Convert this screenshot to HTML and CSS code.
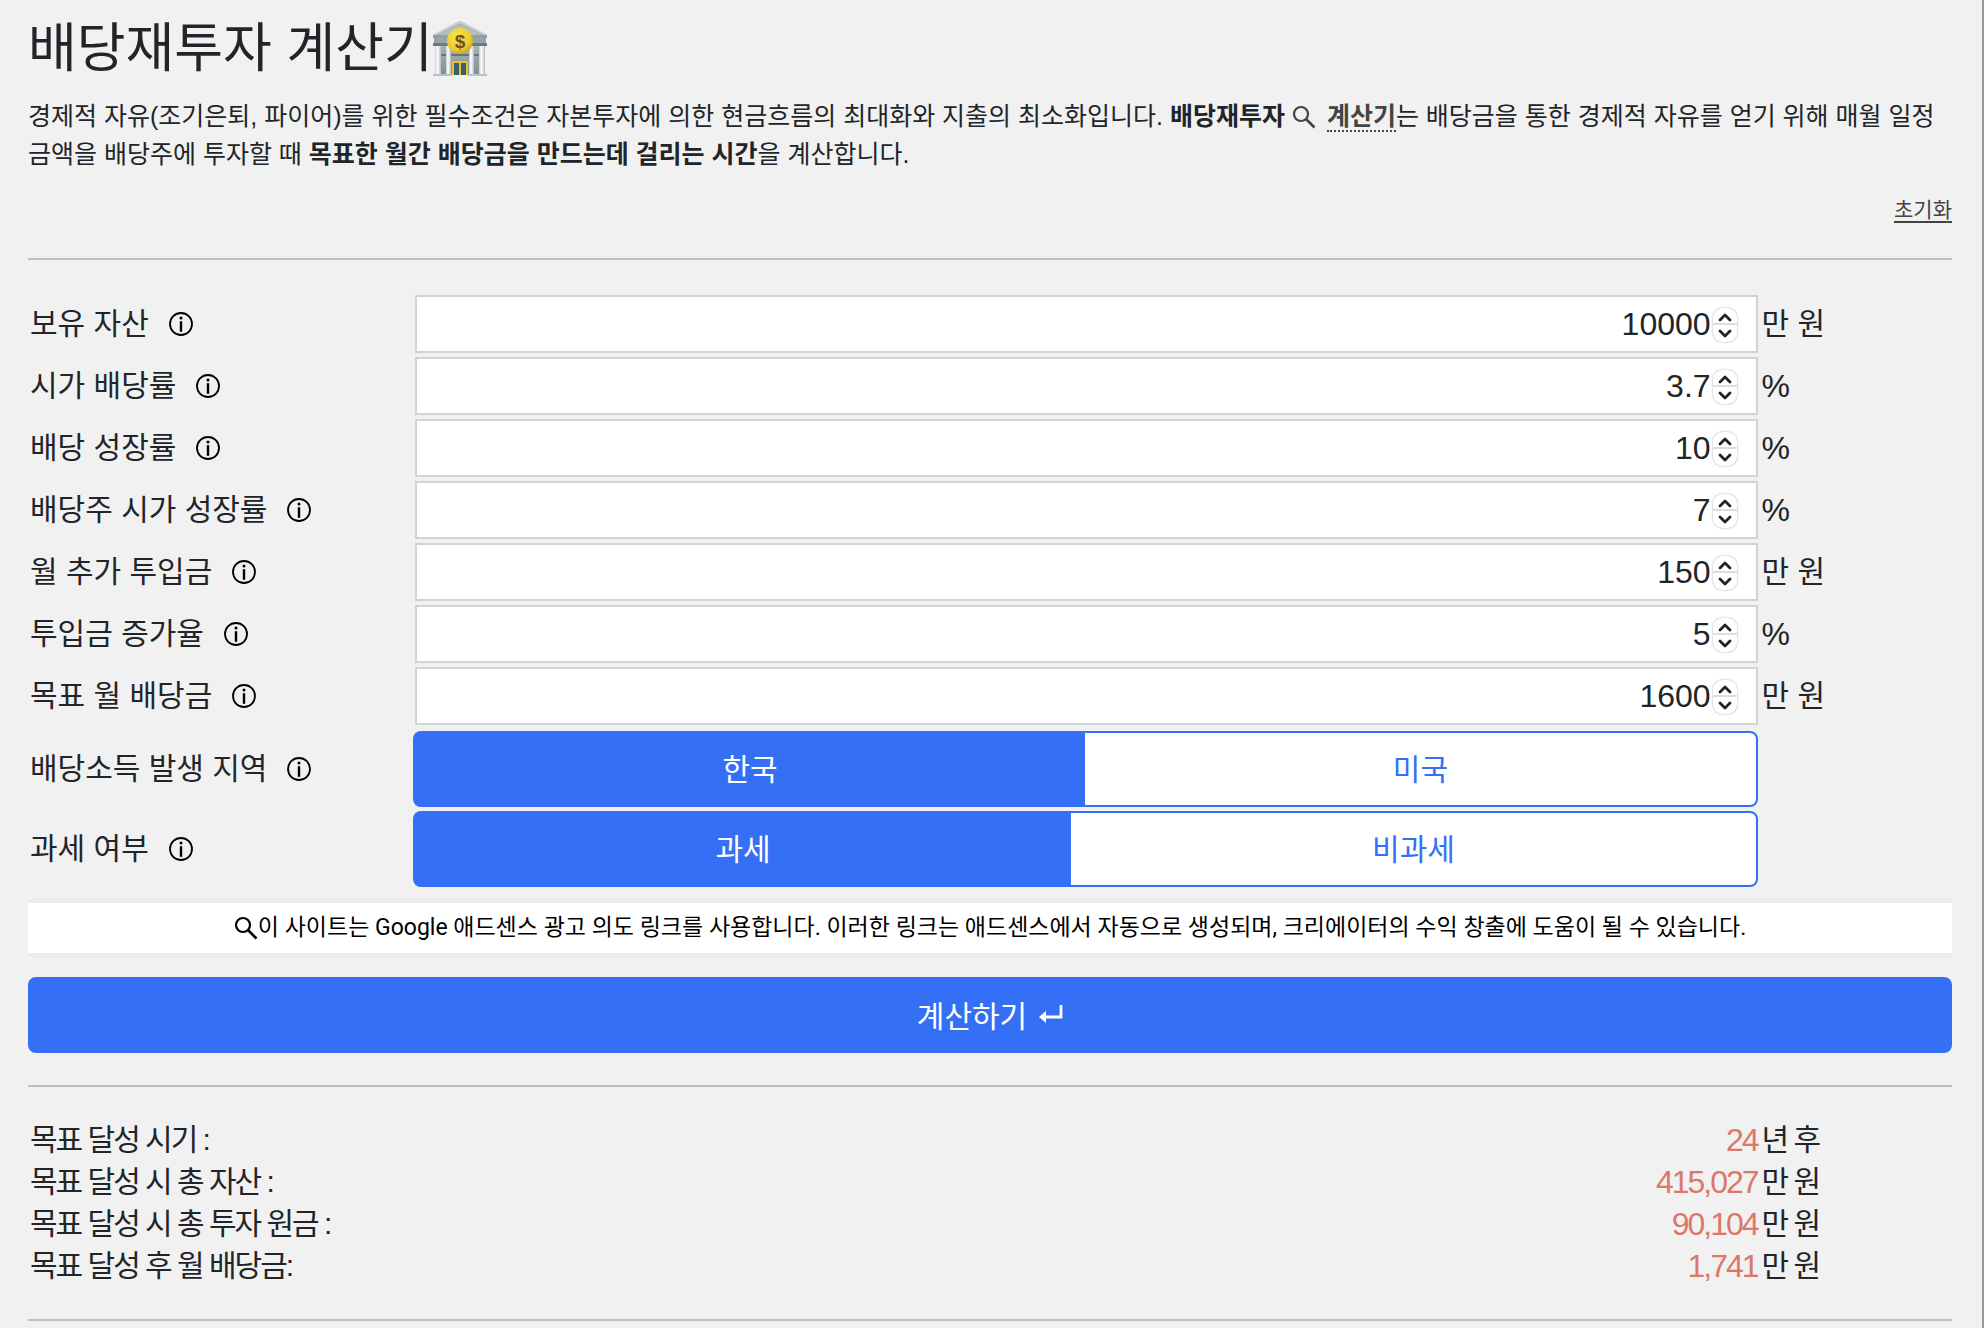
FILE: index.html
```html
<!DOCTYPE html>
<html lang="ko">

<head>
    <meta charset="UTF-8">
    <meta name="viewport" content="width=device-width, initial-scale=1.0">
    <title>배당재투자 계산기</title>
    <link rel="stylesheet" href="styles.css">
</head>

<body>

    <!-- shared icons -->
    <svg class="sprite" aria-hidden="true">
        <symbol id="info" viewBox="0 0 24 24">
            <circle cx="12" cy="12" r="11" fill="none" stroke="currentColor" stroke-width="1.8" />
            <circle cx="12" cy="6" r="1.5" fill="currentColor" />
            <path d="M12 9.2v10.6" stroke="currentColor" stroke-width="2.4" />
        </symbol>
        <symbol id="search" viewBox="0 0 24 24">
            <circle cx="9" cy="9" r="7" fill="none" stroke="currentColor" stroke-width="2.2" />
            <path d="M14 14l8.5 8.5" stroke="currentColor" stroke-width="2.6" />
        </symbol>
        <symbol id="up" viewBox="0 0 24 16">
            <path d="M7 12l5-5 5 5" fill="none" stroke="currentColor" stroke-width="2.8" stroke-linecap="round" stroke-linejoin="round" />
        </symbol>
        <symbol id="down" viewBox="0 0 24 16">
            <path d="M7 5l5 5 5-5" fill="none" stroke="currentColor" stroke-width="2.8" stroke-linecap="round" stroke-linejoin="round" />
        </symbol>
    </svg>

    <main class="container">
        <h1>배당재투자 계산기<svg class="bank" viewBox="0 0 54 56" role="img" aria-label="은행">
                <defs>
                    <linearGradient id="wall" x1="0" y1="0" x2="0" y2="1">
                        <stop offset="0" stop-color="#a9b5b7" />
                        <stop offset="1" stop-color="#7f9093" />
                    </linearGradient>
                    <linearGradient id="column" x1="0" y1="0" x2="1" y2="0">
                        <stop offset="0" stop-color="#c3cbce" />
                        <stop offset="0.4" stop-color="#ffffff" />
                        <stop offset="1" stop-color="#b4bdc2" />
                    </linearGradient>
                    <radialGradient id="coin" cx="0.4" cy="0.35" r="0.7">
                        <stop offset="0" stop-color="#f9e64f" />
                        <stop offset="0.7" stop-color="#edca2f" />
                        <stop offset="1" stop-color="#c79a25" />
                    </radialGradient>
                </defs>
                <rect x="2" y="23" width="50" height="31" fill="url(#wall)" />
                <rect x="2" y="33" width="50" height="2" fill="#64767a" />
                <path d="M27 0L54 14v3H0v-3z" fill="#8fa0a3" />
                <path d="M27 3L49 14H5z" fill="#b3bfc0" />
                <path d="M27 0L54 14h-4L27 2.5 4 14H0z" fill="#c5cfd1" />
                <rect x="1" y="17" width="52" height="5" fill="#95a4a7" />
                <rect x="0" y="22" width="54" height="3" fill="#687b7f" />
                <rect x="2" y="25" width="6" height="28" fill="url(#column)" />
                <rect x="13" y="25" width="5" height="28" fill="url(#column)" />
                <rect x="36" y="25" width="5" height="28" fill="url(#column)" />
                <rect x="46" y="25" width="6" height="28" fill="url(#column)" />
                <rect x="0" y="53" width="19" height="2" fill="#b8c4c4" />
                <rect x="35" y="53" width="19" height="2" fill="#b8c4c4" />
                <rect x="19" y="40" width="16" height="14" fill="#e8c22d" />
                <rect x="21" y="42" width="5" height="12" fill="#3c5d70" />
                <rect x="28" y="42" width="5" height="12" fill="#3c5d70" />
                <circle cx="27" cy="20" r="13" fill="url(#coin)" />
                <text class="coin-sign" x="27" y="27" text-anchor="middle">$</text>
            </svg></h1>

        <p class="intro">경제적 자유(조기은퇴, 파이어)를 위한 필수조건은 자본투자에 의한 현금흐름의 최대화와 지출의 최소화입니다. <b>배당재투자 <a class="keyword" href="#"><svg class="search" aria-hidden="true"><use href="#search" /></svg><span>계산기</span></a></b>는 배당금을 통한 경제적 자유를 얻기 위해 매월 일정 금액을 배당주에 투자할 때 <b>목표한 월간 배당금을 만드는데 걸리는 시간</b>을 계산합니다.</p>

        <div class="reset">
            <a href="#" onclick="document.getElementById('calc').reset()">초기화</a>
        </div>

        <hr>

        <form id="calc" class="calc" onsubmit="return false">
            <div class="row">
                <div class="name"><label for="asset">보유 자산</label><svg class="info"><use href="#info" /></svg></div>
                <div class="field">
                    <input type="number" id="asset" value="10000">
                    <div class="spinner">
                        <button type="button" aria-label="증가" onclick="step('asset', 1)"><svg><use href="#up" /></svg></button>
                        <button type="button" aria-label="감소" onclick="step('asset', -1)"><svg><use href="#down" /></svg></button>
                    </div>
                </div>
                <span class="unit">만 원</span>
            </div>
            <div class="row">
                <div class="name"><label for="yield">시가 배당률</label><svg class="info"><use href="#info" /></svg></div>
                <div class="field">
                    <input type="number" id="yield" value="3.7" step="0.1">
                    <div class="spinner">
                        <button type="button" aria-label="증가" onclick="step('yield', 1)"><svg><use href="#up" /></svg></button>
                        <button type="button" aria-label="감소" onclick="step('yield', -1)"><svg><use href="#down" /></svg></button>
                    </div>
                </div>
                <span class="unit percent">%</span>
            </div>
            <div class="row">
                <div class="name"><label for="growth">배당 성장률</label><svg class="info"><use href="#info" /></svg></div>
                <div class="field">
                    <input type="number" id="growth" value="10">
                    <div class="spinner">
                        <button type="button" aria-label="증가" onclick="step('growth', 1)"><svg><use href="#up" /></svg></button>
                        <button type="button" aria-label="감소" onclick="step('growth', -1)"><svg><use href="#down" /></svg></button>
                    </div>
                </div>
                <span class="unit percent">%</span>
            </div>
            <div class="row">
                <div class="name"><label for="price">배당주 시가 성장률</label><svg class="info"><use href="#info" /></svg></div>
                <div class="field">
                    <input type="number" id="price" value="7">
                    <div class="spinner">
                        <button type="button" aria-label="증가" onclick="step('price', 1)"><svg><use href="#up" /></svg></button>
                        <button type="button" aria-label="감소" onclick="step('price', -1)"><svg><use href="#down" /></svg></button>
                    </div>
                </div>
                <span class="unit percent">%</span>
            </div>
            <div class="row">
                <div class="name"><label for="monthly">월 추가 투입금</label><svg class="info"><use href="#info" /></svg></div>
                <div class="field">
                    <input type="number" id="monthly" value="150">
                    <div class="spinner">
                        <button type="button" aria-label="증가" onclick="step('monthly', 1)"><svg><use href="#up" /></svg></button>
                        <button type="button" aria-label="감소" onclick="step('monthly', -1)"><svg><use href="#down" /></svg></button>
                    </div>
                </div>
                <span class="unit">만 원</span>
            </div>
            <div class="row">
                <div class="name"><label for="increase">투입금 증가율</label><svg class="info"><use href="#info" /></svg></div>
                <div class="field">
                    <input type="number" id="increase" value="5">
                    <div class="spinner">
                        <button type="button" aria-label="증가" onclick="step('increase', 1)"><svg><use href="#up" /></svg></button>
                        <button type="button" aria-label="감소" onclick="step('increase', -1)"><svg><use href="#down" /></svg></button>
                    </div>
                </div>
                <span class="unit percent">%</span>
            </div>
            <div class="row">
                <div class="name"><label for="goal">목표 월 배당금</label><svg class="info"><use href="#info" /></svg></div>
                <div class="field">
                    <input type="number" id="goal" value="1600">
                    <div class="spinner">
                        <button type="button" aria-label="증가" onclick="step('goal', 1)"><svg><use href="#up" /></svg></button>
                        <button type="button" aria-label="감소" onclick="step('goal', -1)"><svg><use href="#down" /></svg></button>
                    </div>
                </div>
                <span class="unit">만 원</span>
            </div>

            <div class="toggles">
                <div class="row">
                    <div class="name"><span id="region">배당소득 발생 지역</span><svg class="info"><use href="#info" /></svg></div>
                    <div class="field">
                        <div class="btn-group" role="group" aria-labelledby="region">
                            <button type="button" class="active" onclick="pick(this)">한국</button>
                            <button type="button" onclick="pick(this)">미국</button>
                        </div>
                    </div>
                </div>
                <div class="row">
                    <div class="name"><span id="tax">과세 여부</span><svg class="info"><use href="#info" /></svg></div>
                    <div class="field">
                        <div class="btn-group" role="group" aria-labelledby="tax">
                            <button type="button" class="active" onclick="pick(this)">과세</button>
                            <button type="button" onclick="pick(this)">비과세</button>
                        </div>
                    </div>
                </div>
            </div>

            <div class="notice">
                <svg class="search" aria-hidden="true"><use href="#search" /></svg>
                <span>이 사이트는 Google 애드센스 광고 의도 링크를 사용합니다. 이러한 링크는 애드센스에서 자동으로 생성되며, 크리에이터의 수익 창출에 도움이 될 수 있습니다.</span>
            </div>

            <button type="submit" class="submit">계산하기
                <svg class="enter" viewBox="0 0 24 20" aria-hidden="true">
                    <path d="M22 1v12H5" fill="none" stroke="currentColor" stroke-width="2.8" />
                    <path d="M0 13l7-6v12z" fill="currentColor" />
                </svg>
            </button>
        </form>

        <hr>

        <table class="result">
            <tr>
                <th>목표 달성 시기 :</th>
                <td class="value">24</td>
                <td class="after">년 후</td>
            </tr>
            <tr>
                <th>목표 달성 시 총 자산 :</th>
                <td class="value">415,027</td>
                <td class="after">만 원</td>
            </tr>
            <tr>
                <th>목표 달성 시 총 투자 원금 :</th>
                <td class="value">90,104</td>
                <td class="after">만 원</td>
            </tr>
            <tr>
                <th>목표 달성 후 월 배당금:</th>
                <td class="value">1,741</td>
                <td class="after">만 원</td>
            </tr>
        </table>

        <hr>
    </main>

    <script>
        function step(id, dir) {
            let input = document.getElementById(id);
            if (dir > 0) {
                input.stepUp();
            } else {
                input.stepDown();
            }
        }

        function pick(button) {
            for (let b of button.parentElement.children) {
                b.classList.toggle('active', b === button);
            }
        }
    </script>

</body>

</html>
```

FILE: styles.css
```css
* {
    box-sizing: border-box;
}

body {
    margin: 0;
    min-height: 100vh;
    background-color: #f1f1f1;
    border-right: 2px solid #999;
    color: #212529;
    font-family: "Liberation Sans", "Noto Sans CJK KR", sans-serif;
    font-size: 30px;
    line-height: 42px;
}

.sprite {
    display: none;
}

.container {
    padding: 14px 30px 0 28px;
}

h1 {
    display: flex;
    align-items: center;
    margin: 0;
    font-size: 53px;
    font-weight: 400;
    line-height: 70px;
}

.bank {
    width: 54px;
    height: 56px;
}

.coin-sign {
    font-size: 19px;
    font-weight: bold;
    fill: #6d5219;
}

.intro {
    margin: 13px 0 21px;
    font-size: 25px;
    line-height: 38px;
    word-break: keep-all;
}

.keyword {
    color: #444;
    text-decoration: none;
}

.keyword span {
    border-bottom: 2px dotted #444;
}

.search {
    width: 24px;
    height: 24px;
}

.keyword .search {
    margin-right: 11px;
    vertical-align: -4px;
}

.reset {
    font-size: 21px;
    line-height: 32px;
    text-align: right;
}

.reset a {
    color: #444;
    text-decoration: none;
    border-bottom: 2px solid #444;
}

hr {
    margin: 32px 0;
    border: 0;
    border-top: 2px solid #bfbfbf;
}

.calc {
    margin-top: 35px;
}

.row {
    display: flex;
    align-items: center;
    margin-bottom: 4px;
}

.name {
    display: flex;
    align-items: center;
    width: 20%;
    padding: 0 2px;
}

.info {
    width: 24px;
    height: 24px;
    margin-left: 20px;
    color: #000;
}

.field {
    position: relative;
    width: 70%;
    padding: 0 2px;
}

.unit {
    padding: 0 2px;
}

.percent {
    font-size: 32px;
}

input {
    display: block;
    width: 100%;
    height: 58px;
    padding: 0 45px 0 20px;
    border: 2px solid #ced4da;
    border-radius: 0;
    background: #fff;
    color: #212529;
    font-family: inherit;
    font-size: 32px;
    text-align: right;
    appearance: textfield;
}

input::-webkit-inner-spin-button {
    display: none;
}

/* stepper drawn over the right end of the input */
.spinner {
    position: absolute;
    top: 13px;
    right: 23px;
    width: 24px;
    height: 34px;
    border-radius: 9px;
    background: #fff;
    box-shadow: 0 0 2px rgba(0, 0, 0, 0.4);
}

.spinner button {
    display: block;
    width: 24px;
    height: 17px;
    padding: 0;
    border: 0;
    background: none;
    color: #222;
}

.spinner button:first-child {
    border-bottom: 2px solid #ddd;
}

.spinner svg {
    display: block;
    width: 24px;
    height: 16px;
}

.toggles {
    margin-top: 6px;
}

.btn-group {
    display: flex;
    margin-left: -2px;
}

.btn-group button {
    flex: 1 1 auto;
    height: 76px;
    padding: 0 24px 4px;
    border: 2px solid #346ff6;
    background: #fff;
    color: #346ff6;
    font-family: inherit;
    font-size: 30px;
}

.btn-group button:first-child {
    border-right: 0;
    border-radius: 8px 0 0 8px;
}

.btn-group button:last-child {
    border-left: 0;
    border-radius: 0 8px 8px 0;
}

.btn-group .active {
    background: #346ff6;
    color: #fff;
}

.notice {
    display: flex;
    align-items: center;
    justify-content: center;
    min-height: 58px;
    margin: 12px 0 20px;
    border: solid #ebeded;
    border-width: 4px 0;
    background: #fff;
    color: #000;
    font-family: Roboto, "Noto Sans CJK KR", sans-serif;
    font-size: 23px;
}

.submit {
    display: flex;
    align-items: center;
    justify-content: center;
    gap: 12px;
    width: 100%;
    height: 76px;
    padding-bottom: 4px;
    border: 0;
    border-radius: 8px;
    background: #346ff6;
    color: #fff;
    font-family: inherit;
    font-size: 30px;
}

.enter {
    width: 24px;
    height: 20px;
}

.result {
    width: 100%;
    border-collapse: collapse;
    letter-spacing: -2px;
}

.result th,
.result td {
    padding: 0 2px;
    font-weight: 400;
    text-align: left;
}

.result .value {
    color: #dc7868;
    font-size: 32px;
    text-align: right;
}

.result .after {
    width: 10%;
}
```
